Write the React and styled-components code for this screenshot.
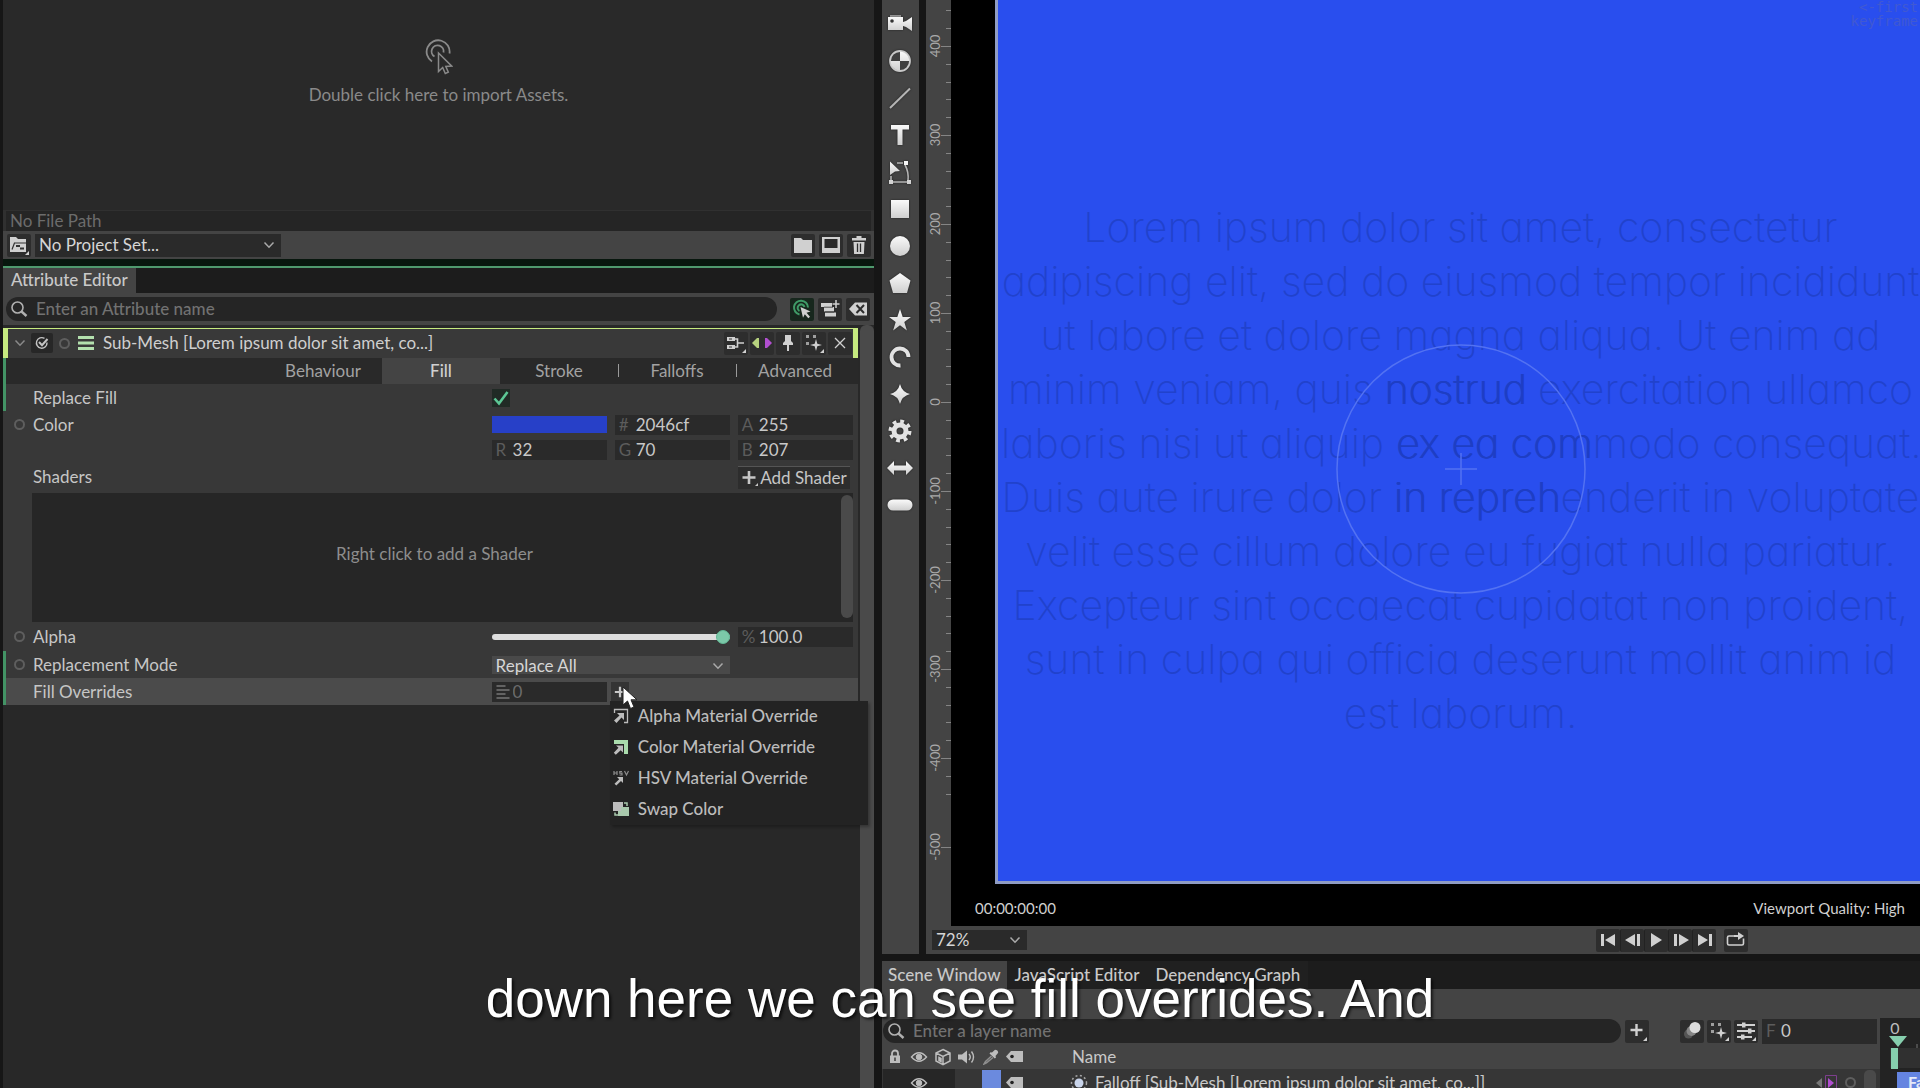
import React, { useState } from "react";
import styled, { createGlobalStyle, css } from "styled-components";

const GlobalStyle = createGlobalStyle`
    * {
        box-sizing: border-box;
    }
    body {
        margin: 0;
        background: #161616;
        color: #c4c4c4;
        font-family: Lato, "Liberation Sans", sans-serif;
        font-size: 17px;
        line-height: 20px;
        overflow: hidden;
    }
    button, input, select {
        font: inherit;
        color: inherit;
        margin: 0;
        padding: 0;
        border: 0;
        background: none;
        outline: none;
    }
    svg {
        display: block;
        flex: none;
    }
`;

const Screen = styled.div`
    position: relative;
    display: grid;
    grid-template-columns: minmax(0, 882fr) minmax(0, 1038fr);
    height: 100vh;
    overflow: hidden;
`;

/* ---------- left side ---------- */

const LeftSide = styled.div`
    display: flex;
    flex-direction: column;
    min-height: 0;
    padding: 0 8px 0 3px;
`;

const AssetsDrop = styled.div`
    display: flex;
    flex-direction: column;
    align-items: center;
    gap: 10px;
    height: 210px;
    padding-top: 39px;
    background: #292929;
    color: #8a8a8a;
`;

const FilePath = styled.div`
    height: 21px;
    padding: 0 4px;
    border: solid #303030;
    border-width: 1px 3px 0;
    background: #252525;
    color: #6c6c6c;
`;

const ProjectBar = styled.div`
    display: flex;
    align-items: center;
    gap: 4px;
    height: 28px;
    padding: 0 3px 0 4px;
    background: #444;
`;

const Spacer = styled.div`
    flex: 1;
`;

const IconButton = styled.button`
    display: flex;
    align-items: center;
    justify-content: center;
    width: 24px;
    height: 23px;
    border-radius: 2px;
    background: ${props => (props.$active ? "#17271d" : "#2d2d2d")};
    color: #d0d0d0;
`;

const SelectBox = styled.div`
    display: grid;
    grid-template-columns: 1fr 24px;
    align-items: center;
    width: ${props => props.$width || "auto"};
    height: ${props => props.$height || "23px"};
    background: ${props => props.$bg || "#2a2a2a"};
    color: #d6d6d6;
    select {
        grid-area: 1 / 1 / 2 / 3;
        height: 100%;
        padding-left: 4px;
        appearance: none;
    }
    svg {
        grid-area: 1 / 2;
        justify-self: center;
        pointer-events: none;
        color: #aaa;
    }
`;

const FocusLine = styled.div`
    height: 9px;
    border-bottom: 2px solid #4f9a6e;
    background: #08170e;
`;

const TabStrip = styled.div`
    display: flex;
    height: ${props => props.$height};
    background: #1c1c1c;
`;

const Tab = styled.button`
    padding: 0 ${props => props.$pad || "8px"} 1px;
    background: ${props => (props.$active ? "#444" : "#202020")};
    color: #c9c9c9;
    font-weight: 500;
`;

const SearchRow = styled.div`
    display: flex;
    align-items: center;
    gap: 4px;
    height: 32px;
    padding: 0 4px 0 3px;
    background: #444;
`;

const SearchPill = styled.label`
    display: flex;
    flex: 1;
    align-items: center;
    gap: 8px;
    height: 24px;
    margin-right: ${props => props.$after || "0"};
    padding-left: 4px;
    border-radius: 12px;
    background: #252525;
    color: #b0b0b0;
    input {
        flex: 1;
        min-width: 0;
    }
    input::placeholder {
        color: #727272;
        font-weight: 500;
        opacity: 1;
    }
`;

const EditorArea = styled.div`
    display: flex;
    flex: 1;
    gap: 2px;
    min-height: 0;
    background: #282828;
`;

const EditorScroll = styled.div`
    flex: 1;
    min-width: 0;
    padding-top: 3px;
`;

const ScrollBar = styled.div`
    width: ${props => props.$width};
    border-radius: 6px 6px 0 0;
    background: #4a4a4a;
`;

const GroupHeader = styled.div`
    display: flex;
    align-items: center;
    height: 30px;
    padding-right: 1px;
    padding-bottom: 1px;
    border: solid #c6ea80;
    border-width: 1px 5px 0;
    background: #393939;
    color: #cfcfcf;
`;

const HeaderMark = styled.span`
    display: flex;
    align-items: center;
    justify-content: center;
    width: ${props => props.$width};
    height: 20px;
    border-radius: 2px;
    background: ${props => (props.$dark ? "#272727" : "none")};
    color: ${props => props.$color || "#8a8a8a"};
`;

const HeaderTitle = styled.span`
    flex: 1;
    padding-left: 6px;
`;

const HeaderTools = styled.div`
    display: flex;
    gap: 2px;
`;

const Modified = styled.div`
    border-left: 3px solid ${props => (props.$on ? "#439365" : "transparent")};
`;

const SectionTabs = styled.div`
    display: grid;
    grid-template-columns: repeat(5, 118px);
    justify-content: end;
    height: 26px;
    padding-right: 4px;
    background: #292929;
`;

const SectionTab = styled.button`
    position: relative;
    background: ${props => (props.$active ? "#444" : "none")};
    color: ${props => (props.$active ? "#d0d0d0" : "#a2a2a2")};
    font-weight: ${props => (props.$active ? "500" : "400")};
    ${props => props.$divider && css`
        &::before {
            content: "";
            position: absolute;
            left: 0;
            top: 6px;
            width: 1px;
            height: 13px;
            background: #9a9a9a;
        }
    `}
`;

const FormBody = styled.div`
    background: #383838;
`;

const Row = styled.div`
    display: grid;
    grid-template-columns: minmax(0, 477fr) repeat(3, minmax(0, 115fr));
    column-gap: 8px;
    align-items: center;
    height: ${props => props.$height || "27px"};
    padding-right: 5px;
    background: ${props => (props.$lit ? "#4b4b4b" : "none")};
`;

const RowLabel = styled.label`
    display: flex;
    align-items: center;
    gap: 8px;
    padding-left: 8px;
    color: #c6c6c6;
`;

const Pip = styled.i`
    width: 11px;
    height: 11px;
    border: 2px solid ${props => (props.$off ? "transparent" : "#5e5e5e")};
    border-radius: 50%;
`;

const TickBox = styled.span`
    display: grid;
    width: 18px;
    height: 18px;
    background: #202a25;
    input, svg {
        grid-area: 1 / 1;
    }
    input {
        width: 18px;
        height: 18px;
        appearance: none;
    }
    svg {
        pointer-events: none;
    }
`;

const Swatch = styled.button`
    height: 17px;
    background: #2740c8;
`;

const Field = styled.label`
    display: flex;
    align-items: center;
    height: 20px;
    padding-left: 4px;
    background: #2a2a2a;
    color: #5c5c5c;
    span, svg {
        width: ${props => props.$lead || "17px"};
    }
    input {
        flex: 1;
        min-width: 0;
        color: ${props => (props.$dim ? "#6c6c6c" : "#c8c8c8")};
    }
`;

const AddShader = styled.button`
    display: flex;
    align-items: center;
    justify-content: center;
    height: 23px;
    margin-right: 3px;
    border-top: 1px solid #555;
    background: #2d2d2d;
    color: #c6c6c6;
    white-space: nowrap;
`;

const ShaderList = styled.div`
    display: flex;
    height: 129px;
    margin: 0 5px 0 26px;
    background: #262626;
    color: #8d8d8d;
`;

const ShaderHint = styled.div`
    display: flex;
    flex: 1;
    align-items: center;
    justify-content: center;
    padding-right: 4px;
    padding-bottom: 8px;
`;

const ShaderScroll = styled.div`
    width: 12px;
    height: 123px;
    margin-top: 2px;
    border-radius: 6px;
    background: #4a4a4a;
`;

const Slider = styled.input`
    grid-column: span 2;
    width: 100%;
    height: 14px;
    appearance: none;
    &::-webkit-slider-runnable-track {
        height: 6px;
        border-radius: 3px;
        background: #dedede;
    }
    &::-webkit-slider-thumb {
        width: 14px;
        height: 14px;
        margin-top: -4px;
        border: 1px solid #62b795;
        border-radius: 50%;
        background: #7cc9a9;
        appearance: none;
    }
`;

const AddOverride = styled.div`
    position: relative;
    width: 20px;
    margin-left: -4px;
`;

const PlusButton = styled.button`
    display: flex;
    align-items: center;
    justify-content: center;
    width: 18px;
    height: 20px;
    background: #343434;
    color: #c8c8c8;
`;

const Pointer = styled.svg`
    position: absolute;
    left: 10px;
    top: 4px;
    z-index: 3;
`;

const Menu = styled.div`
    position: absolute;
    left: -1px;
    top: 19px;
    z-index: 2;
    width: 258px;
    background: #232323;
    box-shadow: 2px 2px 3px rgba(0, 0, 0, 0.3);
`;

const MenuItem = styled.button`
    display: flex;
    align-items: center;
    gap: 9px;
    width: 100%;
    height: 31px;
    padding-left: 3px;
    color: #bcbcbc;
    font-weight: 500;
    white-space: nowrap;
`;

/* ---------- right side ---------- */

const RightSide = styled.div`
    display: flex;
    flex-direction: column;
    gap: 7px;
    min-width: 0;
    min-height: 0;
`;

const Stage = styled.div`
    display: flex;
    flex: 1;
    gap: 7px;
    min-height: 0;
`;

const ToolStrip = styled.div`
    width: 37px;
    padding-top: 5px;
    background: #444;
`;

const Tool = styled.button`
    display: flex;
    align-items: center;
    justify-content: center;
    width: 36px;
    height: 37px;
    svg {
        filter: drop-shadow(0 0 1px #222);
    }
`;

const StageMain = styled.div`
    display: flex;
    flex: 1;
    flex-direction: column;
    min-width: 0;
    background: #444;
`;

const StageView = styled.div`
    display: flex;
    flex: 1;
    min-height: 0;
`;

const RulerBox = styled.div`
    width: 25px;
    overflow: hidden;
`;

const Viewport = styled.div`
    display: flex;
    flex: 1;
    flex-direction: column;
    min-width: 0;
    background: #000;
`;

const Frame = styled.div`
    position: relative;
    flex: 1;
    min-height: 0;
    margin-left: 44px;
    padding: 200px 0 0 3px;
    border: solid #8f9cc4;
    border-width: 0 0 3px 3px;
    background: #294eee;
    overflow: hidden;
`;

const LoremLine = styled.div`
    color: #2142cc;
    font-family: Inter, sans-serif;
    font-size: 41px;
    font-weight: 200;
    font-feature-settings: "cv11";
    line-height: 54px;
    text-align: center;
    white-space: nowrap;
    b {
        color: #1e3ec4;
        font-weight: 200;
        text-shadow: 1px 0 #1e3ec4;
    }
`;

const FalloffShape = styled.svg`
    position: absolute;
    left: 50%;
    top: 344px;
    margin-left: -123px;
`;

const FrameNote = styled.div`
    position: absolute;
    right: 2px;
    top: 0;
    color: #4059d2;
    font-family: "DejaVu Sans Mono", monospace;
    font-size: 14px;
    line-height: 14px;
    text-align: right;
`;

const ViewportFooter = styled.div`
    display: flex;
    align-items: center;
    justify-content: space-between;
    height: 42px;
    padding: 6px 15px 0 24px;
    color: #d0d0d0;
    font-size: 15px;
`;

const TransportBar = styled.div`
    display: flex;
    align-items: center;
    height: 28px;
    padding: 0 172px 0 6px;
`;

const Transport = styled.div`
    display: flex;
    margin-right: 8px;
    button + button {
        border-left: 1px solid #222;
    }
`;

const ScenePanel = styled.div`
    height: 127px;
    overflow: hidden;
    background: #444;
`;

const SceneBody = styled.div`
    display: flex;
    margin-top: 29px;
`;

const SceneMain = styled.div`
    flex: 1;
    min-width: 0;
`;

const SceneTools = styled.div`
    display: flex;
    align-items: center;
    gap: 4px;
    height: 26px;
    padding: 0 3px 0 1px;
`;

const SceneGroup = styled.div`
    display: flex;
    gap: 3px;
    margin-left: 27px;
`;

const FrameField = styled(Field)`
    width: 115px;
    height: 25px;
    span {
        width: 15px;
    }
`;

const LayerHead = styled.div`
    display: flex;
    align-items: center;
    height: 25px;
    padding-left: 1px;
    color: #c9c9c9;
`;

const LayerRow = styled(LayerHead)`
    height: 27px;
    background: #363636;
`;

const IconCell = styled.span`
    display: flex;
    align-items: center;
    justify-content: center;
    width: 24px;
    height: ${props => (props.$dark ? "27px" : "24px")};
    background: ${props => (props.$dark ? "#262626" : "none")};
    color: #bdbdbd;
`;

const LayerColor = styled.span`
    width: 19px;
    height: 25px;
    background: #6b8ade;
`;

const LayerName = styled.span`
    flex: 1;
    display: flex;
    align-items: center;
    gap: 7px;
    padding-left: ${props => props.$indent};
`;

const LayerEnd = styled.span`
    display: flex;
    align-items: center;
    gap: 8px;
    height: 100%;
    padding-right: 4px;
`;

const LayerScroll = styled.i`
    width: 12px;
    height: 26px;
    border-radius: 5px 5px 0 0;
    background: #4a4a4a;
`;

const Timeline = styled.div`
    width: 40px;
    background: #232323;
`;

const Caption = styled.div`
    position: absolute;
    left: 0;
    right: 0;
    bottom: 59px;
    z-index: 5;
    color: #fff;
    font-family: "Liberation Sans", sans-serif;
    font-size: 53px;
    line-height: 60px;
    text-align: center;
    text-shadow: 2px 2px 3px rgba(0, 0, 0, 0.7);
    pointer-events: none;
`;

/* ---------- icons ---------- */

function Icon({ w = 16, h = 16, box, children, ...rest }) {
    return (
        <svg width={w} height={h} viewBox={box || `0 0 ${w} ${h}`} fill="currentColor" aria-hidden="true" {...rest}>
            {children}
        </svg>
    );
}

const Chevron = () => (
    <Icon w={12} h={8}><path d="M1.500 1.500 6 6.200l4.500-4.700" fill="none" stroke="currentColor" strokeWidth="1.500" /></Icon>
);

const Corner = () => <path d="M20 20v-4l-4 4z" />;

const SearchIcon = () => (
    <Icon w={18} h={18}>
        <circle cx="7.500" cy="7.500" r="5.500" fill="none" stroke="currentColor" strokeWidth="1.600" />
        <path d="m11.500 11.500 5 4.500" stroke="currentColor" strokeWidth="2.400" />
    </Icon>
);

const ClickIcon = () => (
    <Icon w={28} h={36} fill="none" stroke="#8a8a8a" strokeWidth="1.800">
        <path d="M7 22.500a11.500 11.500 0 1 1 17.500-8" />
        <path d="M9.500 17.500a6 6 0 1 1 9-4" />
        <path d="M13.500 14v18.500l4.200-4 2.600 6 3-1.300-2.500-5.700 6-.4z" fill="#292929" strokeWidth="1.500" />
    </Icon>
);

const FolderIcon = () => <Icon w={20} h={18}><path d="M1 2h7l2 2h9v13H1z" /></Icon>;

const ProjectIcon = () => (
    <Icon w={20} h={20}>
        <path d="M1 2h6l2 2h8v13H1z" />
        <path d="M5 8h12M3 14.500 5.500 8" stroke="#333" strokeWidth="1.200" />
        <path d="M7 11h4M11 13.500h4" stroke="#333" strokeWidth="1.800" />
        <Corner />
    </Icon>
);

const CompIcon = () => (
    <Icon w={20} h={18}>
        <path d="M1 1h18v16H1z" />
        <path d="M3.500 3h13v9h-13z" fill="#2a2a2a" />
    </Icon>
);

const TrashIcon = () => (
    <Icon w={16} h={18}>
        <path d="M1 2h4.500V0h5v2H15v2.500H1zM2.500 6h11l-.6 12H3.100z" />
        <path d="M6.500 7.500v8.500M9.500 7.500v8.500" stroke="#2d2d2d" strokeWidth="1.300" />
    </Icon>
);

const TargetIcon = () => (
    <Icon w={20} h={20}>
        <g fill="none" stroke="#3f9b67" strokeWidth="2">
            <path d="M7.500 15.500a7 7 0 1 1 8.500-7" />
            <path d="M7.500 12a3.500 3.500 0 1 1 5-4" />
        </g>
        <path d="m8.500 8 10 4.500-4 1.200 3.500 4-1.700 1.500-3.500-4-1.800 3.500z" />
    </Icon>
);

const AddRowsIcon = () => (
    <Icon w={20} h={18}>
        <path d="M1 3h11v4H1zM4 7h10v4.500H4zM5 12.500h11v4H5z" />
        <path d="M4 7.200h9M5 12h9" stroke="#2d2d2d" strokeWidth=".8" />
        <path d="M16 0v8M12.500 4h7" stroke="currentColor" strokeWidth="1.500" />
    </Icon>
);

const ClearIcon = () => (
    <Icon w={20} h={16}>
        <path d="M1 8 7 1.500h12v13H7z" />
        <path d="m8.500 4 7.500 8M16 4l-7.500 8" stroke="#2d2d2d" strokeWidth="2" />
    </Icon>
);

const GraphIcon = () => (
    <Icon w={20} h={20}>
        <path d="M1 4h8v4H1zM1 12h8v4H1z" />
        <path d="M3 6h3M3 14h3" stroke="#333" />
        <path d="M9 6h2.500v8H9M12 10h6" fill="none" stroke="currentColor" strokeWidth="1.600" />
        <Corner />
    </Icon>
);

const KeysIcon = () => (
    <Icon w={22} h={12}>
        <path d="M8 1v10H6L1 6l5-5z" fill="#b6d17e" />
        <path d="M14 1v10h2l5-5-5-5z" fill="#b14fd0" />
    </Icon>
);

const PinIcon = () => (
    <Icon w={12} h={18}><path d="M3 1h6v6l2 2v2H7v6H5v-6H1V9l2-2z" /></Icon>
);

const SparkIcon = () => (
    <Icon w={20} h={20}>
        <path d="M2 2h3v3H2zM9 2h3v3H9zM2 9h3v3H2z" opacity=".7" />
        <path d="m12 6 1.300 4.700L18 12l-4.700 1.300L12 18l-1.300-4.700L6 12l4.700-1.300z" />
        <Corner />
    </Icon>
);

const CrossIcon = () => (
    <Icon w={14} h={14}><path d="m2 2 10 10M12 2 2 12" stroke="currentColor" strokeWidth="1.300" /></Icon>
);

const LinesIcon = () => (
    <Icon w={16} h={14}><path d="M0 0h16v3H0zM0 5.500h16v3H0zM0 11h16v3H0z" fill="#b3e0ae" /></Icon>
);

const RoundTick = () => (
    <Icon w={14} h={14} fill="none" stroke="#c4c4c4">
        <path d="M12 6.500A5.300 5.300 0 1 1 9.500 2.400" strokeWidth="1.400" />
        <path d="m4 6 3 3.200L12.500 3" strokeWidth="2" />
    </Icon>
);

const PlusIcon = ({ size = 14 }) => (
    <Icon w={size} h={size} box="0 0 14 14"><path d="M7 1v12M1 7h12" stroke="currentColor" strokeWidth="2.600" /></Icon>
);

const ShaderPlusIcon = () => (
    <Icon w={19} h={20}>
        <path d="M8 3v13M1.500 9.500h13" stroke="currentColor" strokeWidth="2.600" />
        <path d="M17 15v3h-3z" />
    </Icon>
);

const PlusMenuIcon = () => (
    <Icon w={20} h={20}><path d="M9.500 3v12M3.500 9h12" stroke="currentColor" strokeWidth="2.400" /><Corner /></Icon>
);

const AlphaIcon = () => (
    <Icon w={16} h={16}>
        <path d="M1.500 5V1.500h13v13H11" fill="none" stroke="currentColor" strokeWidth="1.300" />
        <path d="M4 5h7v7L8.500 9.500l-5 5.500L1 12.500l5.500-5z" />
    </Icon>
);

const ColorIcon = () => (
    <Icon w={16} h={16}>
        <path d="M1 1h14v14h-4V5H1z" fill="#a9dbac" />
        <path d="M3 6.500h7v7l-2.300-2.300-4.900 4.500-2-2 4.700-5z" />
    </Icon>
);

const HsvIcon = () => (
    <Icon w={16} h={16}>
        <path d="M1 1v4M4 1v4M1 3h3M9 1.500H6.800v1.700H9V5H6.500M11.500 1l2 4 2-4" fill="none" stroke="#8e8e8e" strokeWidth="1.200" />
        <path d="M4 7h6v6l-2-2-4.700 4.500-1.800-1.800 4.700-4.500z" />
    </Icon>
);

const SwapIcon = () => (
    <Icon w={16} h={16}>
        <path d="M0 1h10v9H0z" />
        <path d="M8 6h8v9H5v-5h3z" fill="#a9c9ad" />
        <path d="M11 2h3v3M2 11.500V14h3" fill="none" stroke="#a9c9ad" strokeWidth="1.500" />
    </Icon>
);

const EyeIcon = () => (
    <Icon w={18} h={14} fill="none" stroke="currentColor">
        <path d="M1.500 7Q9-1.500 16.500 7 9 15.500 1.500 7z" strokeWidth="1.400" />
        <circle cx="9" cy="7" r="2.800" fill="currentColor" />
    </Icon>
);

const TagIcon = () => (
    <Icon w={18} h={13}>
        <path d="M0 6.500 5 1h12v11H5z" />
        <circle cx="6" cy="6.500" r="1.800" fill="#222" />
    </Icon>
);

const LockIcon = () => (
    <Icon w={12} h={15}>
        <path d="M3 7V4.500a3 3 0 0 1 6 0V7" fill="none" stroke="currentColor" strokeWidth="1.800" />
        <path d="M1 6.500h10V14H1z" />
        <path d="M6 8.500v3.500" stroke="#444" strokeWidth="1.600" />
    </Icon>
);

const CubeIcon = () => (
    <Icon w={18} h={18} fill="none" stroke="currentColor" strokeWidth="1.500">
        <path d="m9 1.500 7 3.500v8l-7 3.700L2 13V5zM2 5l7 3.500L16 5M9 8.500v8" />
        <path d="m5 9.500 2 1v3l-2-1z" fill="currentColor" />
    </Icon>
);

const SoundIcon = () => (
    <Icon w={18} h={14}>
        <path d="M0 4.500h4L9 .5v13L4 9.500H0z" />
        <path d="M11 4q2.500 3 0 6M13.500 1.500q4 5.500 0 11" fill="none" stroke="currentColor" strokeWidth="1.400" />
    </Icon>
);

const DropperIcon = () => (
    <Icon w={16} h={16}>
        <path d="M9 3.500 12 .8q3 0 3.200 3L12.500 7l.5 1.500-1.200 1L6.500 4.500l1-1.200z" />
        <path d="m8.500 7-6 5.500L1 15l2.500-1.200L10 8.500" fill="none" stroke="#8e8e8e" strokeWidth="1.500" />
    </Icon>
);

const FalloffIcon = () => (
    <Icon w={18} h={18}>
        <circle cx="9" cy="9" r="7.500" fill="none" stroke="#a5a5a5" strokeWidth="1.500" strokeDasharray="2 2.500" />
        <circle cx="9" cy="9" r="4.500" fill="#c9d4ea" />
    </Icon>
);

const OnionIcon = () => (
    <Icon w={20} h={20}>
        <circle cx="6.500" cy="13" r="4.500" fill="#555" />
        <circle cx="9.500" cy="10" r="5" fill="#858585" />
        <circle cx="13" cy="6.500" r="5.500" fill="#dcdcdc" />
    </Icon>
);

const MixIcon = () => (
    <Icon w={20} h={20}>
        <path d="M1 4h18M1 10h18M1 16h15" stroke="currentColor" strokeWidth="1.800" />
        <path d="M6 1.500h3.500v5H6zM12 7.500h3.500v5H12zM5 13.500h3.500v5H5z" />
        <Corner />
    </Icon>
);

const LoopIcon = () => (
    <Icon w={20} h={16}>
        <path d="M8 4H3q-1.500 0-1.500 1.500v6Q1.500 13 3 13h13q1.500 0 1.500-1.500v-5" fill="none" stroke="currentColor" strokeWidth="1.600" />
        <path d="M8 3h4V0l6 4-6 4V5H8z" />
    </Icon>
);

const transport = [
    { name: "First frame", path: "M1 1h3v12H1zM15 1v12L5 7z" },
    { name: "Previous frame", path: "M10 1v12L0 7zM12 1h3v12h-3z" },
    { name: "Play", path: "M2 0v14l11-7z" },
    { name: "Next frame", path: "M1 1h3v12H1zM6 1v12l10-6z" },
    { name: "Last frame", path: "M1 1v12l10-6zM12 1h3v12h-3z" },
];

const tools = [
    { name: "Camera", art: <><path d="M0 5h15v13H0zM15 10l3-1 6-4v14l-6-4-3-1z" /><path d="M2 3h11v2H2z" opacity=".5" /><circle cx="4" cy="9" r="1.800" fill="#333" /></> },
    { name: "Shader ball", art: <><circle cx="12" cy="12" r="10" fill="#3f3f3f" stroke="#c8c8c8" strokeWidth="1.800" /><path d="M12 12V2.500a9.500 9.500 0 0 1 9.500 9.500zM12 12v9.500A9.500 9.500 0 0 1 2.500 12z" /></> },
    { name: "Line", art: <path d="M2 22 22 2.500" stroke="#b5b5b5" strokeWidth="2" /> },
    { name: "Text", art: <path d="M3 2h18v4.500h-6.500V22h-5V6.500H3z" /> },
    { name: "Edit path", art: <><path d="M5 22h14M9 3h6M20 21q1-9-3-16M3 16v4" fill="none" stroke="#b5b5b5" strokeWidth="1.600" /><path d="M2 1.500 12 11l-5 .5L2 15z" /><path d="M1 20h4v4H1zM19 20h4v4h-4zM16 1h4v4h-4z" /></> },
    { name: "Rectangle", art: <path d="M3 3h18v18H3z" /> },
    { name: "Ellipse", art: <circle cx="12" cy="12" r="10" /> },
    { name: "Polygon", art: <path d="m12 2 10.500 7.500L19 22H5L1.500 9.500z" /> },
    { name: "Star", art: <path d="m12 1 2.700 8H23l-6.700 5 2.600 8.500L12 17.300 5.100 22.500 7.700 14 1 9h8.300z" /> },
    { name: "Arc", art: <path d="M12.500 20.500A8.500 8.500 0 1 1 20.500 12" fill="none" stroke="#e2e2e2" strokeWidth="3.800" /> },
    { name: "Super ellipse", art: <path d="M12 2q2 8 10 10-8 2-10 10-2-8-10-10 8-2 10-10z" /> },
    { name: "Cog", art: <><circle cx="12" cy="12" r="6" fill="none" stroke="#e2e2e2" strokeWidth="5" /><circle cx="12" cy="12" r="9.700" fill="none" stroke="#e2e2e2" strokeWidth="3.600" strokeDasharray="3.800 3.800" /></> },
    { name: "Arrow", art: <path d="M-1 12 6 5v4.500h12V5l7 7-7 7v-4.500H6V19z" /> },
    { name: "Capsule", art: <rect x="-0.500" y="6.500" width="25" height="11" rx="5.500" /> },
];

const lorem = [
    ["Lorem ipsum dolor sit amet, consectetur"],
    ["adipiscing elit, sed do eiusmod tempor incididunt"],
    ["ut labore et dolore magna aliqua. Ut enim ad"],
    ["minim veniam, quis ", "nostrud", " exercitation ullamco"],
    ["laboris nisi ut aliquip ", "ex ea com", "modo consequat."],
    ["Duis aute irure dolor ", "in repreh", "enderit in voluptate"],
    ["velit esse cillum dolore eu fugiat nulla pariatur."],
    ["Excepteur sint occaecat cupidatat non proident,"],
    ["sunt in culpa qui officia deserunt mollit anim id"],
    ["est laborum."],
];

const overrides = [
    { name: "Alpha Material Override", icon: <AlphaIcon /> },
    { name: "Color Material Override", icon: <ColorIcon /> },
    { name: "HSV Material Override", icon: <HsvIcon /> },
    { name: "Swap Color", icon: <SwapIcon /> },
];

function Ruler() {
    const zero = 402;
    const step = 89;
    const minors = [];
    for (let i = -29; i <= 22; i++) {
        minors.push(Math.round(zero + (i * step) / 5));
    }
    return (
        <svg width="25" height="926" fill="#a9a9a9" fontFamily="Lato, sans-serif" fontSize="13">
            {minors.map(y => <path key={y} d={`M20 ${y}h5v1h-5z`} fill="#858585" />)}
            {[400, 300, 200, 100, 0, -100, -200, -300, -400, -500].map(value => {
                const y = Math.round(zero - (value / 100) * step);
                return (
                    <g key={value}>
                        <path d={`M15 ${y}h10v1H15z`} fill="#858585" />
                        <text transform={`translate(14 ${y}) rotate(-90)`} textAnchor="middle">{value}</text>
                    </g>
                );
            })}
        </svg>
    );
}

function NumberField({ lead, value, label, width }) {
    return (
        <Field $lead={width}>
            <span>{lead}</span>
            <input aria-label={label} defaultValue={value} />
        </Field>
    );
}

const ModeBox = styled(SelectBox)`
    grid-column: span 2;
`;

function ModeSelect() {
    return (
        <ModeBox $height="18px" $bg="#494949">
            <select id="mode" defaultValue="Replace All">
                <option>Replace All</option>
            </select>
            <Chevron />
        </ModeBox>
    );
}

function AttributeEditor() {
    const [section, setSection] = useState("Fill");
    const [alpha, setAlpha] = useState(100);
    return (
        <EditorArea>
            <EditorScroll>
                <GroupHeader>
                    <HeaderMark $width="23px"><Chevron /></HeaderMark>
                    <HeaderMark $width="22px" $dark><RoundTick /></HeaderMark>
                    <HeaderMark $width="22px"><Pip /></HeaderMark>
                    <HeaderMark $width="22px"><LinesIcon /></HeaderMark>
                    <HeaderTitle>Sub-Mesh [Lorem ipsum dolor sit amet, co...]</HeaderTitle>
                    <HeaderTools>
                        <IconButton aria-label="Connections"><GraphIcon /></IconButton>
                        <IconButton aria-label="Keyframes"><KeysIcon /></IconButton>
                        <IconButton aria-label="Pin"><PinIcon /></IconButton>
                        <IconButton aria-label="Presets"><SparkIcon /></IconButton>
                        <IconButton aria-label="Close"><CrossIcon /></IconButton>
                    </HeaderTools>
                </GroupHeader>
                <Modified $on>
                    <SectionTabs>
                        {["Behaviour", "Fill", "Stroke", "Falloffs", "Advanced"].map((name, i) => (
                            <SectionTab key={name} $active={section === name} $divider={i > 2} onClick={() => setSection(name)}>
                                {name}
                            </SectionTab>
                        ))}
                    </SectionTabs>
                </Modified>
                <FormBody>
                    <Modified $on>
                        <Row>
                            <RowLabel htmlFor="replace"><Pip $off />Replace Fill</RowLabel>
                            <TickBox>
                                <input id="replace" type="checkbox" defaultChecked />
                                <Icon w={18} h={18}><path d="m2.500 9.500 4.500 5 8.500-11.500" fill="none" stroke="#5cc795" strokeWidth="2.600" /></Icon>
                            </TickBox>
                        </Row>
                    </Modified>
                    <Modified>
                        <Row>
                            <RowLabel htmlFor="hex"><Pip />Color</RowLabel>
                            <Swatch aria-label="Color swatch" />
                            <Field>
                                <span>#</span>
                                <input id="hex" defaultValue="2046cf" />
                            </Field>
                            <NumberField lead="A" label="A" value="255" />
                        </Row>
                        <Row $height="23px">
                            <span />
                            <NumberField lead="R" label="R" value="32" />
                            <NumberField lead="G" label="G" value="70" />
                            <NumberField lead="B" label="B" value="207" />
                        </Row>
                        <Row $height="32px">
                            <RowLabel as="span"><Pip $off />Shaders</RowLabel>
                            <span />
                            <span />
                            <AddShader><ShaderPlusIcon />Add Shader</AddShader>
                        </Row>
                        <ShaderList>
                            <ShaderHint>Right click to add a Shader</ShaderHint>
                            <ShaderScroll />
                        </ShaderList>
                        <Row $height="29px">
                            <RowLabel htmlFor="alpha"><Pip />Alpha</RowLabel>
                            <Slider id="alpha" type="range" min="0" max="100" value={alpha} onChange={e => setAlpha(Number(e.target.value))} />
                            <NumberField lead="%" label="Alpha percent" value="100.0" />
                        </Row>
                    </Modified>
                    <Modified $on>
                        <Row>
                            <RowLabel htmlFor="mode"><Pip />Replacement Mode</RowLabel>
                            <ModeSelect />
                        </Row>
                        <Row $lit>
                            <RowLabel htmlFor="overrides"><Pip $off />Fill Overrides</RowLabel>
                            <Field $dim>
                                <Icon w={16} h={14}><path d="M0 1h9M0 5h13M0 9h9M0 13h13" stroke="#777" strokeWidth="1.400" /></Icon>
                                <input id="overrides" defaultValue="0" />
                            </Field>
                            <AddOverride>
                                <PlusButton aria-label="Add override"><PlusIcon size={12} /></PlusButton>
                                <Pointer width="18" height="24" viewBox="0 0 18 24">
                                    <path d="M2 1v18l4.500-4 3 7.500 3.500-1.500-3-7.200H16z" fill="#fff" stroke="#222" />
                                </Pointer>
                                <Menu role="menu">
                                    {overrides.map(item => (
                                        <MenuItem key={item.name} role="menuitem">{item.icon}{item.name}</MenuItem>
                                    ))}
                                </Menu>
                            </AddOverride>
                        </Row>
                    </Modified>
                </FormBody>
            </EditorScroll>
            <ScrollBar $width="14px" />
        </EditorArea>
    );
}

function LeftPanels() {
    return (
        <LeftSide>
            <AssetsDrop>
                <ClickIcon />
                Double click here to import Assets.
            </AssetsDrop>
            <FilePath>No File Path</FilePath>
            <ProjectBar>
                <IconButton aria-label="Project"><ProjectIcon /></IconButton>
                <SelectBox $width="246px">
                    <select aria-label="Project" defaultValue="No Project Set...">
                        <option>No Project Set...</option>
                    </select>
                    <Chevron />
                </SelectBox>
                <Spacer />
                <IconButton aria-label="New folder"><FolderIcon /></IconButton>
                <IconButton aria-label="New composition"><CompIcon /></IconButton>
                <IconButton aria-label="Delete"><TrashIcon /></IconButton>
            </ProjectBar>
            <FocusLine />
            <TabStrip $height="25px">
                <Tab $active>Attribute Editor</Tab>
            </TabStrip>
            <SearchRow>
                <SearchPill $after="9px">
                    <SearchIcon />
                    <input aria-label="Search attributes" placeholder="Enter an Attribute name" />
                </SearchPill>
                <IconButton aria-label="Follow selection" $active><TargetIcon /></IconButton>
                <IconButton aria-label="Add rows"><AddRowsIcon /></IconButton>
                <IconButton aria-label="Clear"><ClearIcon /></IconButton>
            </SearchRow>
            <AttributeEditor />
        </LeftSide>
    );
}

function ViewportPanel() {
    return (
        <Stage>
            <ToolStrip>
                <svg width="0" height="0">
                    <linearGradient id="metal" x2="0" y2="1">
                        <stop stopColor="#fafafa" />
                        <stop offset="1" stopColor="#cfcfcf" />
                    </linearGradient>
                </svg>
                {tools.map(tool => (
                    <Tool key={tool.name} aria-label={tool.name}>
                        <Icon w={24} h={24} fill="url(#metal)" overflow="visible">{tool.art}</Icon>
                    </Tool>
                ))}
            </ToolStrip>
            <StageMain>
                <StageView>
                    <RulerBox><Ruler /></RulerBox>
                    <Viewport>
                        <Frame>
                            {lorem.map(([before, near, after]) => (
                                <LoremLine key={before}>{before}{near && <b>{near}</b>}{after}</LoremLine>
                            ))}
                            <FalloffShape width="250" height="250" fill="none" stroke="#5372f2" strokeWidth="1.500">
                                <circle cx="125" cy="125" r="124" />
                                <path d="M125 109v32M109 125h32" />
                            </FalloffShape>
                            <FrameNote>&lt;-first<br />keyframe</FrameNote>
                        </Frame>
                        <ViewportFooter>
                            <span>00:00:00:00</span>
                            <span>Viewport Quality: High</span>
                        </ViewportFooter>
                    </Viewport>
                </StageView>
                <TransportBar>
                    <SelectBox $width="95px" $height="20px">
                        <select aria-label="Zoom" defaultValue="72%">
                            <option>72%</option>
                        </select>
                        <Chevron />
                    </SelectBox>
                    <Spacer />
                    <Transport>
                        {transport.map(item => (
                            <IconButton key={item.name} aria-label={item.name}>
                                <Icon w={16} h={14}><path d={item.path} /></Icon>
                            </IconButton>
                        ))}
                    </Transport>
                    <IconButton aria-label="Loop"><LoopIcon /></IconButton>
                </TransportBar>
            </StageMain>
        </Stage>
    );
}

function SceneWindow() {
    return (
        <ScenePanel>
            <TabStrip $height="28px">
                <Tab $active $pad="6px">Scene Window</Tab>
                <Tab $pad="8px">JavaScript Editor</Tab>
                <Tab>Dependency Graph</Tab>
            </TabStrip>
            <SceneBody>
                <SceneMain>
                    <SceneTools>
                        <SearchPill>
                            <SearchIcon />
                            <input aria-label="Search layers" placeholder="Enter a layer name" />
                        </SearchPill>
                        <IconButton aria-label="Add layer"><PlusMenuIcon /></IconButton>
                        <SceneGroup>
                            <IconButton aria-label="Onion skin"><OnionIcon /></IconButton>
                            <IconButton aria-label="Effects"><SparkIcon /></IconButton>
                            <IconButton aria-label="Filters"><MixIcon /></IconButton>
                        </SceneGroup>
                        <FrameField>
                            <span>F</span>
                            <input aria-label="Frame" defaultValue="0" />
                        </FrameField>
                    </SceneTools>
                    <LayerHead>
                        <IconCell><LockIcon /></IconCell>
                        <IconCell><EyeIcon /></IconCell>
                        <IconCell><CubeIcon /></IconCell>
                        <IconCell><SoundIcon /></IconCell>
                        <IconCell><DropperIcon /></IconCell>
                        <IconCell><TagIcon /></IconCell>
                        <LayerName $indent="45px">Name</LayerName>
                    </LayerHead>
                    <LayerRow>
                        <IconCell $dark />
                        <IconCell $dark><EyeIcon /></IconCell>
                        <IconCell $dark />
                        <IconCell />
                        <IconCell><LayerColor /></IconCell>
                        <IconCell><TagIcon /></IconCell>
                        <LayerName $indent="43px">
                            <FalloffIcon />
                            Falloff [Sub-Mesh [Lorem ipsum dolor sit amet, co...]]
                        </LayerName>
                        <LayerEnd>
                            <Icon w={22} h={16}>
                                <path d="M7 3v10L1 8z" fill="#777" />
                                <path d="M10.500.5h11v15h-11z" fill="none" stroke="#7d3f8c" />
                                <path d="M13 3v10l6-5z" fill="#b14fd0" />
                            </Icon>
                            <Pip />
                            <LayerScroll />
                        </LayerEnd>
                    </LayerRow>
                </SceneMain>
                <Timeline>
                    <svg width="40" height="77">
                        <text x="15" y="16" textAnchor="middle" fontSize="16" fill="#bdbdbd">0</text>
                        <path d="M37 26v5" stroke="#777" />
                        <path d="M10 30h30v20H10z" fill="#303030" />
                        <path d="M9 18h18l-9 11z" fill="#86cfae" />
                        <path d="M11 30h7v21h-7z" fill="#86cfae" />
                        <path d="M17 54h23v23H17z" fill="#6484e0" />
                        <text x="28" y="70" fontSize="16" fontWeight="bold" fill="#e4e9f7">Fa</text>
                    </svg>
                </Timeline>
            </SceneBody>
        </ScenePanel>
    );
}

function App() {
    return (
        <Screen>
            <GlobalStyle />
            <LeftPanels />
            <RightSide>
                <ViewportPanel />
                <SceneWindow />
            </RightSide>
            <Caption>down here we can see fill overrides. And</Caption>
        </Screen>
    );
}

export default App;
